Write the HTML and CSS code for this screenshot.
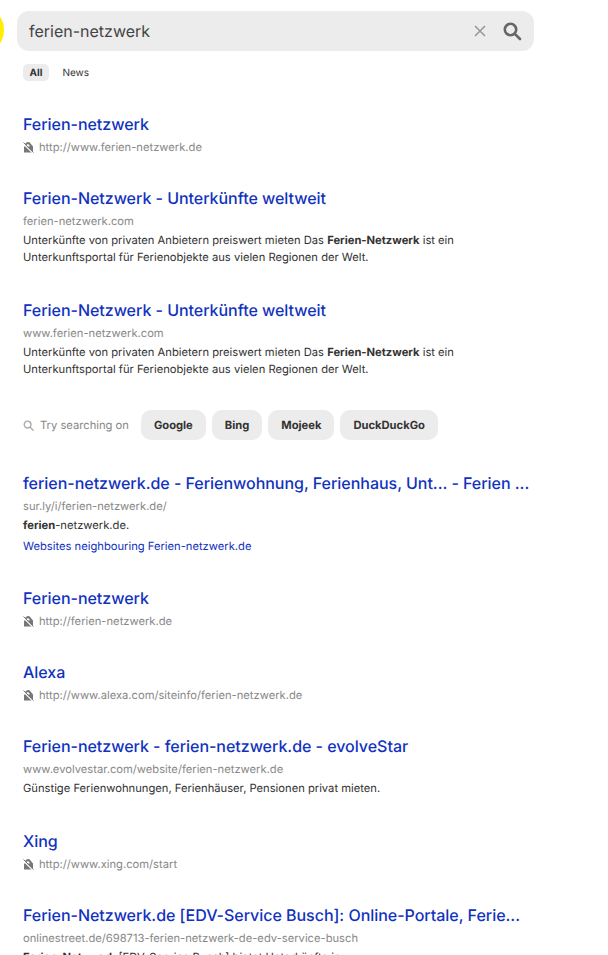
FILE: index.html
```html
<!DOCTYPE html>
<html lang="en">
<head>
    <meta charset="UTF-8">
    <meta name="viewport" content="width=device-width, initial-scale=1.0">
    <title>ferien-netzwerk</title>
    <link rel="stylesheet" href="styles.css">
</head>
<body>
    <div class="logo-dot"></div>

    <header class="search">
        <span class="search__query">ferien-netzwerk</span>
        <svg class="search__clear" width="14" height="14" viewBox="0 0 14 14">
            <path d="M2 2L12 12M12 2L2 12"/>
        </svg>
        <svg class="search__icon" width="20" height="20" viewBox="0 0 20 20">
            <circle cx="8.5" cy="8.5" r="5.7"/>
            <path d="M12.8 12.8L18 18"/>
        </svg>
    </header>

    <nav class="tabs">
        <a href="#" class="tabs__item tabs__item--active">All</a>
        <a href="#" class="tabs__item">News</a>
    </nav>

    <main class="results">
        <article class="result result--plain">
            <a href="#" class="result__title">Ferien-netzwerk</a>
            <div class="result__url">
                <svg class="result__lock" width="11" height="11" viewBox="0 0 11 11">
                    <path class="result__lock-body" d="M1 4.500H2V3.200A3 3 0 0 1 7.500 1.500L10 4.500V10.500H1zM3.300 4.500H6.800L6.300 3A1.700 1.700 0 0 0 3.300 3.200z"/>
                    <path class="result__lock-cut" d="M0 1.300L10 11.300"/>
                    <path class="result__lock-bar" d="M0.500 0.500L10.500 10.500"/>
                </svg>
                http://www.ferien-netzwerk.de
            </div>
        </article>

        <article class="result">
            <a href="#" class="result__title">Ferien-Netzwerk - Unterkünfte weltweit</a>
            <div class="result__url">ferien-netzwerk.com</div>
            <p class="result__text">Unterkünfte von privaten Anbietern preiswert mieten Das <b>Ferien-Netzwerk</b> ist ein Unterkunftsportal für Ferienobjekte aus vielen Regionen der Welt.</p>
        </article>

        <article class="result">
            <a href="#" class="result__title">Ferien-Netzwerk - Unterkünfte weltweit</a>
            <div class="result__url">www.ferien-netzwerk.com</div>
            <p class="result__text">Unterkünfte von privaten Anbietern preiswert mieten Das <b>Ferien-Netzwerk</b> ist ein Unterkunftsportal für Ferienobjekte aus vielen Regionen der Welt.</p>
        </article>

        <section class="try">
            <svg class="try__icon" width="11" height="11" viewBox="0 0 11 11">
                <circle cx="4.600" cy="4.600" r="3.400"/>
                <path d="M7.200 7.200L10.200 10.200"/>
            </svg>
            <span class="try__label">Try searching on</span>
            <a href="#" class="try__link">Google</a>
            <a href="#" class="try__link">Bing</a>
            <a href="#" class="try__link">Mojeek</a>
            <a href="#" class="try__link">DuckDuckGo</a>
        </section>

        <article class="result result--plain">
            <a href="#" class="result__title">ferien-netzwerk.de - Ferienwohnung, Ferienhaus, Unt... - Ferien ...</a>
            <div class="result__url">sur.ly/i/ferien-netzwerk.de/</div>
            <p class="result__text"><b>ferien</b>-netzwerk.de.</p>
            <a href="#" class="result__more">Websites neighbouring Ferien-netzwerk.de</a>
        </article>

        <article class="result result--plain">
            <a href="#" class="result__title">Ferien-netzwerk</a>
            <div class="result__url">
                <svg class="result__lock" width="11" height="11" viewBox="0 0 11 11">
                    <path class="result__lock-body" d="M1 4.500H2V3.200A3 3 0 0 1 7.500 1.500L10 4.500V10.500H1zM3.300 4.500H6.800L6.300 3A1.700 1.700 0 0 0 3.300 3.200z"/>
                    <path class="result__lock-cut" d="M0 1.300L10 11.300"/>
                    <path class="result__lock-bar" d="M0.500 0.500L10.500 10.500"/>
                </svg>
                http://ferien-netzwerk.de
            </div>
        </article>

        <article class="result result--plain">
            <a href="#" class="result__title">Alexa</a>
            <div class="result__url">
                <svg class="result__lock" width="11" height="11" viewBox="0 0 11 11">
                    <path class="result__lock-body" d="M1 4.500H2V3.200A3 3 0 0 1 7.500 1.500L10 4.500V10.500H1zM3.300 4.500H6.800L6.300 3A1.700 1.700 0 0 0 3.300 3.200z"/>
                    <path class="result__lock-cut" d="M0 1.300L10 11.300"/>
                    <path class="result__lock-bar" d="M0.500 0.500L10.500 10.500"/>
                </svg>
                http://www.alexa.com/siteinfo/ferien-netzwerk.de
            </div>
        </article>

        <article class="result">
            <a href="#" class="result__title">Ferien-netzwerk - ferien-netzwerk.de - evolveStar</a>
            <div class="result__url">www.evolvestar.com/website/ferien-netzwerk.de</div>
            <p class="result__text">Günstige Ferienwohnungen, Ferienhäuser, Pensionen privat mieten.</p>
        </article>

        <article class="result result--plain">
            <a href="#" class="result__title">Xing</a>
            <div class="result__url">
                <svg class="result__lock" width="11" height="11" viewBox="0 0 11 11">
                    <path class="result__lock-body" d="M1 4.500H2V3.200A3 3 0 0 1 7.500 1.500L10 4.500V10.500H1zM3.300 4.500H6.800L6.300 3A1.700 1.700 0 0 0 3.300 3.200z"/>
                    <path class="result__lock-cut" d="M0 1.300L10 11.300"/>
                    <path class="result__lock-bar" d="M0.500 0.500L10.500 10.500"/>
                </svg>
                http://www.xing.com/start
            </div>
        </article>

        <article class="result">
            <a href="#" class="result__title">Ferien-Netzwerk.de [EDV-Service Busch]: Online-Portale, Ferie...</a>
            <div class="result__url">onlinestreet.de/698713-ferien-netzwerk-de-edv-service-busch</div>
            <p class="result__text"><b>Ferien-Netzwerk</b> [EDV-Service Busch] bietet Unterkünfte in</p>
        </article>
    </main>
</body>
</html>
```

FILE: styles.css
```css
html, body {
    height: 955px;
    overflow: hidden;
}

body {
    margin: 0;
    padding: 11px 0 0 17px;
    box-sizing: border-box;
    position: relative;
    background-color: white;
    font-family: "Inter", "Liberation Sans", sans-serif;
    color: #333;
    text-rendering: geometricPrecision;
}

.logo-dot {
    position: absolute;
    left: -14px;
    top: 14px;
    width: 18px;
    height: 32px;
    border-radius: 50%;
    background-color: #ffee00;
}

.search {
    display: flex;
    align-items: center;
    width: 517px;
    height: 40px;
    padding: 0 12px;
    box-sizing: border-box;
    border-radius: 12px;
    background-color: #ececec;
}
.search__query {
    flex: 1;
    font-size: 16px;
    color: #444;
}
.search__clear {
    margin-right: 15px;
    fill: none;
    stroke: #999;
    stroke-width: 1.6;
}
.search__icon {
    fill: none;
    stroke: #666;
    stroke-width: 2.6;
    stroke-linecap: round;
}

.tabs {
    display: flex;
    gap: 7px;
    margin: 13px 0 0 6px;
}
.tabs__item {
    padding: 1px 6.5px 0;
    border-radius: 5px;
    font-size: 10px;
    line-height: 16px;
    color: #333;
    text-decoration: none;
}
.tabs__item--active {
    font-weight: 700;
    background-color: #ececec;
}

.results {
    margin: 32px 0 0 6px;
    width: 504px;
}

.result {
    margin-bottom: 33px;
}
.result--plain {
    margin-bottom: 32px;
}
.result__title {
    display: block;
    font-size: 16px;
    font-weight: 500;
    line-height: 22px;
    letter-spacing: -0.03px;
    color: #1132bd;
    text-decoration: none;
    white-space: nowrap;
}
.result__url {
    display: flex;
    align-items: center;
    gap: 5px;
    margin-top: 5px;
    font-size: 11.2px;
    line-height: 15px;
    color: #888;
}
.result__lock-body {
    fill: #777;
    fill-rule: evenodd;
}
.result__lock-cut {
    fill: none;
    stroke: #fff;
    stroke-width: 1.2;
}
.result__lock-bar {
    fill: none;
    stroke: #777;
    stroke-width: 1;
}
.result__text {
    margin: 3px 0 0;
    width: 450px;
    font-size: 11.2px;
    line-height: 17px;
    color: #333;
}
.result__more {
    display: block;
    margin-top: 4px;
    font-size: 11.2px;
    line-height: 17px;
    color: #1132bd;
    text-decoration: none;
}

.try {
    display: flex;
    align-items: center;
    height: 30px;
    margin: -1px 0 32px;
}
.try__icon {
    fill: none;
    stroke: #aaa;
    stroke-width: 1.3;
    stroke-linecap: round;
}
.try__label {
    margin: 0 12px 0 6px;
    font-size: 11.2px;
    color: #888;
}
.try__link {
    margin-right: 6px;
    padding: 0 13px;
    border-radius: 10px;
    font-size: 11.2px;
    font-weight: 700;
    line-height: 30px;
    color: #333;
    text-decoration: none;
    background-color: #ececec;
}
```
